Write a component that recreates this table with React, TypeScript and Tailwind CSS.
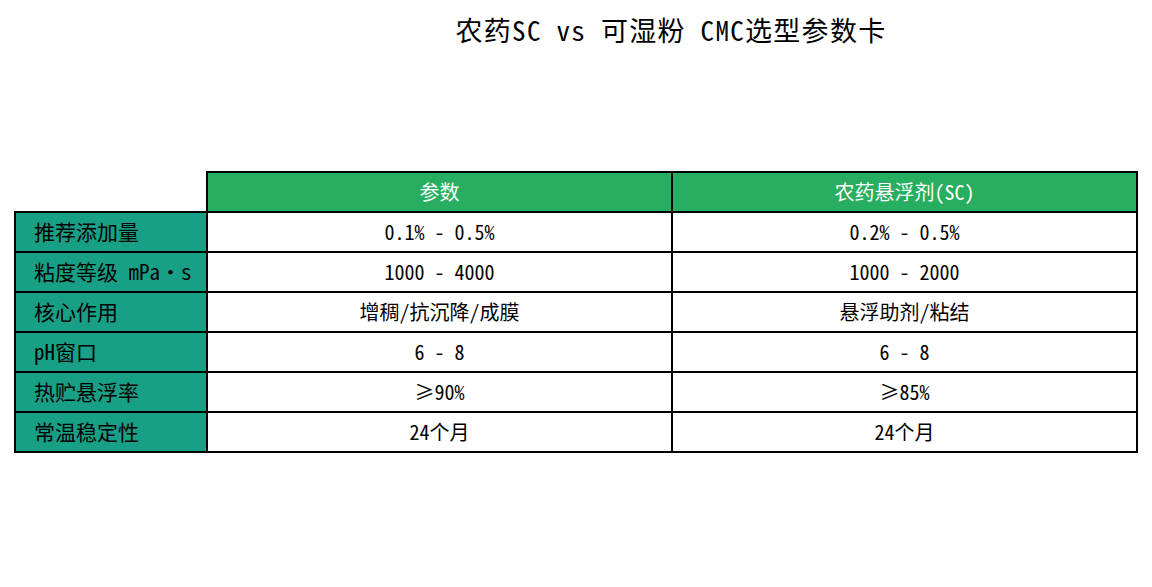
import React from "react";

const rows: [string, string, string][] = [
  ["推荐添加量", "0.1% - 0.5%", "0.2% - 0.5%"],
  ["粘度等级 mPa·s", "1000 - 4000", "1000 - 2000"],
  ["核心作用", "增稠/抗沉降/成膜", "悬浮助剂/粘结"],
  ["pH窗口", "6 - 8", "6 - 8"],
  ["热贮悬浮率", "≥90%", "≥85%"],
  ["常温稳定性", "24个月", "24个月"],
];

const mono = { fontFamily: '"Noto Sans Mono CJK SC", "Noto Sans CJK SC", monospace' };

export default function App() {
  return (
    <div
      className="w-[1152px] h-[587px] bg-white text-black flex flex-col items-center"
      style={mono}
    >
      <h1 className="mt-[11px] text-[27px] leading-[38px] tracking-[1.3px] ml-[190px]">
        农药SC vs 可湿粉 CMC选型参数卡
      </h1>
      <table className="mt-[122px] border-collapse text-[20px]">
        <colgroup>
          <col className="w-[192px]" />
          <col className="w-[465px]" />
          <col className="w-[465px]" />
        </colgroup>
        <thead>
          <tr className="h-[40px]">
            <th className="border-0 bg-white"></th>
            <th className="border-2 border-black bg-[#27ae60] text-white font-normal text-center">参数</th>
            <th className="border-2 border-black bg-[#27ae60] text-white font-normal text-center">农药悬浮剂(SC)</th>
          </tr>
        </thead>
        <tbody>
          {rows.map((r) => (
            <tr key={r[0]} className="h-[40px]">
              <td className="border-2 border-black bg-[#17a086] pl-[18px] text-left text-[21px] whitespace-nowrap">{r[0]}</td>
              <td className="border-2 border-black text-center">{r[1]}</td>
              <td className="border-2 border-black text-center">{r[2]}</td>
            </tr>
          ))}
        </tbody>
      </table>
    </div>
  );
}
